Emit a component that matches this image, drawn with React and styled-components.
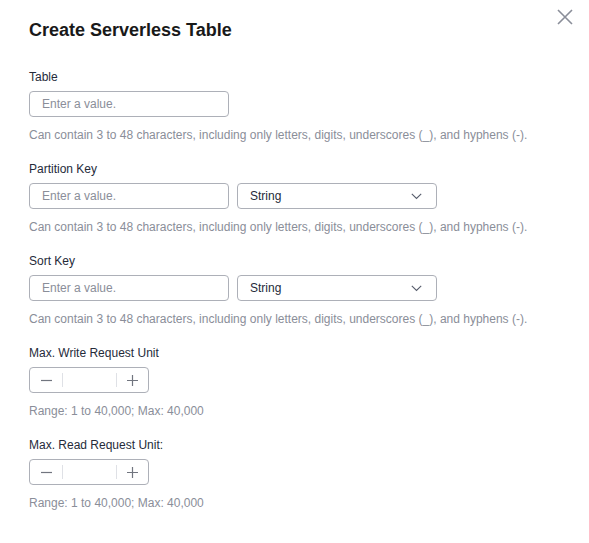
import React from 'react'
import styled, { createGlobalStyle } from 'styled-components'

const GlobalStyle = createGlobalStyle`
  body {
    margin: 0;
    background: #fff;
    font-family: "Liberation Sans", Arial, sans-serif;
  }
`

const Dialog = styled.div`
  position: relative;
  width: 589px;
  height: 543px;
  box-sizing: border-box;
  padding: 18px 29px 0;
  background: #fff;
`

const Title = styled.h1`
  margin: 0;
  font-size: 18px;
  line-height: 24px;
  font-weight: bold;
  color: #191919;
`

const Close = styled.button`
  position: absolute;
  top: 8px;
  right: 15px;
  width: 18px;
  height: 18px;
  padding: 0;
  border: 0;
  background: none;
  color: #8a8e99;
  display: flex;
  align-items: center;
  justify-content: center;
`

const Form = styled.div`
  margin-top: 26px;
  display: flex;
  flex-direction: column;
  gap: 16px;
`

const Field = styled.div`
  display: flex;
  flex-direction: column;
`

const Label = styled.div`
  font-size: 12px;
  line-height: 18px;
  color: #252b3a;
  margin-bottom: 5px;
`

const Row = styled.div`
  display: flex;
  gap: 8px;
`

const Input = styled.input`
  box-sizing: border-box;
  width: 200px;
  height: 26px;
  padding: 0 12px;
  border: 1px solid #adb0b8;
  border-radius: 4px;
  font-family: inherit;
  font-size: 12px;
  color: #252b3a;
  outline: none;

  &::placeholder {
    color: #8a8e99;
  }
`

const Select = styled.div`
  box-sizing: border-box;
  width: 200px;
  height: 26px;
  padding: 0 14px 0 12px;
  border: 1px solid #adb0b8;
  border-radius: 4px;
  display: flex;
  align-items: center;
  justify-content: space-between;
  font-size: 12px;
  color: #252b3a;
`

const Help = styled.div`
  margin-top: 9px;
  font-size: 12px;
  line-height: 18px;
  color: #8a8e99;
`

const Stepper = styled.div`
  box-sizing: border-box;
  width: 120px;
  height: 26px;
  border: 1px solid #adb0b8;
  border-radius: 4px;
  display: flex;
  align-items: center;
`

const StepButton = styled.div`
  width: ${p => p.$w}px;
  height: 100%;
  display: flex;
  align-items: center;
  justify-content: center;
  color: #71757f;
`

const Divider = styled.div`
  width: 1px;
  height: 14px;
  background: #dfe1e6;
`

const StepInput = styled.input`
  flex: 1;
  min-width: 0;
  height: 100%;
  border: 0;
  padding: 0;
  outline: none;
  background: transparent;
`

const Chevron = () => (
  <svg width="11" height="7" viewBox="0 0 11 7" fill="none">
    <path d="M0.8 0.8 L5.5 5.5 L10.2 0.8" stroke="#575d6c" strokeWidth="1.1" />
  </svg>
)

const Minus = () => (
  <svg width="11" height="11" viewBox="0 0 11 11">
    <path d="M0 5.5 H11" stroke="currentColor" strokeWidth="1.2" />
  </svg>
)

const Plus = () => (
  <svg width="11" height="11" viewBox="0 0 11 11">
    <path d="M0 5.5 H11 M5.5 0 V11" stroke="currentColor" strokeWidth="1.2" />
  </svg>
)

const nameHelp =
  'Can contain 3 to 48 characters, including only letters, digits, underscores (_), and hyphens (-).'

const NumberField = ({ label }) => (
  <Field>
    <Label>{label}</Label>
    <Stepper>
      <StepButton $w={32}><Minus /></StepButton>
      <Divider />
      <StepInput />
      <Divider />
      <StepButton $w={31}><Plus /></StepButton>
    </Stepper>
    <Help>Range: 1 to 40,000; Max: 40,000</Help>
  </Field>
)

const KeyField = ({ label }) => (
  <Field>
    <Label>{label}</Label>
    <Row>
      <Input placeholder="Enter a value." />
      <Select>
        <span>String</span>
        <Chevron />
      </Select>
    </Row>
    <Help>{nameHelp}</Help>
  </Field>
)

const App = () => (
  <>
    <GlobalStyle />
    <Dialog>
      <Title>Create Serverless Table</Title>
      <Close aria-label="Close">
        <svg width="16" height="16" viewBox="0 0 16 16">
          <path d="M1 1 L15 15 M15 1 L1 15" stroke="currentColor" strokeWidth="1.6" />
        </svg>
      </Close>
      <Form>
        <Field>
          <Label>Table</Label>
          <Input placeholder="Enter a value." />
          <Help>{nameHelp}</Help>
        </Field>
        <KeyField label="Partition Key" />
        <KeyField label="Sort Key" />
        <NumberField label="Max. Write Request Unit" />
        <NumberField label="Max. Read Request Unit:" />
      </Form>
    </Dialog>
  </>
)

export default App
